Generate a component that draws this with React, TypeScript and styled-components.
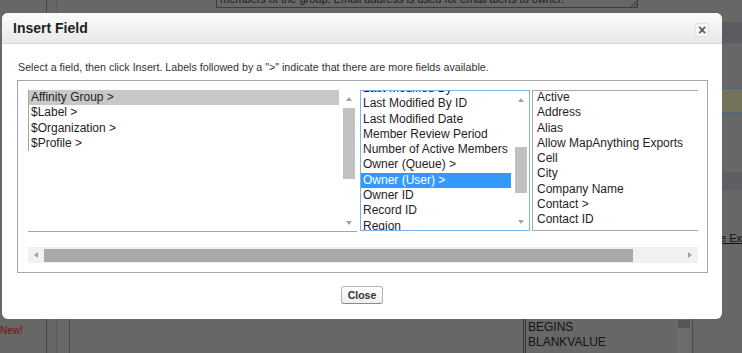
import React from 'react';
import styled, { createGlobalStyle } from 'styled-components';

const GlobalStyle = createGlobalStyle`
  html, body { margin: 0; padding: 0; }
  body {
    background: #676767;
    font-family: "Liberation Sans", Arial, sans-serif;
  }
`;

/* ---------- dimmed page underneath ---------- */

const Page = styled.div`
  position: relative;
  width: 742px;
  height: 353px;
  overflow: hidden;
  background: #676767;
  display: flex;
`;

const LeftRail = styled.div`
  width: 46px;
  flex-shrink: 0;
  display: flex;
  flex-direction: column;
  justify-content: flex-end;
  padding-bottom: 16px;
  box-sizing: border-box;
`;

const NewTag = styled.span`
  font-size: 10px;
  color: #7a0c0c;
  line-height: 12px;
`;

const VLine = styled.div<{ $c: string }>`
  width: 1px;
  flex-shrink: 0;
  background: ${(p) => p.$c};
`;

const Gutter = styled.div`
  width: 9px;
  flex-shrink: 0;
`;

const Main = styled.div`
  width: 665px;
  flex-shrink: 0;
  display: flex;
  flex-direction: column;
`;

const BgTextarea = styled.div`
  margin-left: 159px;
  width: 422px;
  height: 8px;
  box-sizing: border-box;
  border: 1px solid #3c3c3c;
  border-top: none;
  overflow: hidden;
  display: flex;
  justify-content: space-between;
`;

const BgTextareaText = styled.span`
  font-size: 11px;
  line-height: 11px;
  margin-top: -6px;
  margin-left: 3px;
  color: #1c1c1c;
  white-space: nowrap;
`;

const Grip = styled.span`
  width: 6px;
  height: 6px;
  align-self: flex-end;
  background: linear-gradient(135deg, transparent 45%, #333 45%, #333 55%, transparent 55%, transparent 70%, #333 70%, #333 80%, transparent 80%);
`;

const Filler = styled.div`
  flex: 1;
`;

const BottomArea = styled.div`
  height: 34px;
  display: flex;
  padding-left: 12px;
`;

const Panel = styled.div`
  flex: 1;
  border-left: 1px solid #4a4a4a;
  display: flex;
  padding-left: 453px;
`;

const FormulaList = styled.div`
  width: 170px;
  box-sizing: border-box;
  border-left: 3px double #3a3a3a;
  border-right: 1px solid #4a4a4a;
  display: flex;
`;

const FormulaItems = styled.div`
  flex: 1;
  padding: 1px 0 0 2px;
`;

const FormulaItem = styled.div`
  font-size: 12px;
  line-height: 15px;
  color: #141414;
`;

const FormulaScroll = styled.div`
  width: 14px;
  margin-right: 1px;
  background: #6c6c6c;
`;

const FormulaThumb = styled.div`
  height: 8px;
  margin: 1px 1px 0;
  background: #565656;
`;

const RightStrip = styled.div`
  width: 20px;
  flex-shrink: 0;
  display: flex;
  flex-direction: column;
`;

const Band = styled.div<{ $h: number; $bg?: string; $edge?: string }>`
  height: ${(p) => p.$h}px;
  flex-shrink: 0;
  background: ${(p) => p.$bg || 'transparent'};
  box-sizing: border-box;
  ${(p) => (p.$edge ? `border-top: 1px solid ${p.$edge}; border-bottom: 1px solid ${p.$edge};` : '')}
`;

const BgLink = styled.span`
  font-size: 11px;
  line-height: 13px;
  color: #111;
  text-decoration: underline;
  white-space: nowrap;
  margin-left: -2px;
`;

/* ---------- dialog ---------- */

const Dialog = styled.div`
  position: absolute;
  left: 2px;
  top: 13px;
  width: 720px;
  height: 306px;
  background: #fff;
  border-radius: 6px;
  overflow: hidden;
  display: flex;
  flex-direction: column;
  z-index: 2;
`;

const Header = styled.div`
  height: 31px;
  box-sizing: border-box;
  border-bottom: 1px solid #d5d7d9;
  background: linear-gradient(#fbfbfb, #e7e9ea);
  display: flex;
  align-items: center;
  justify-content: space-between;
  padding: 0 13px 0 11px;
  flex-shrink: 0;
`;

const Title = styled.h2`
  margin: 0;
  font-size: 14px;
  font-weight: bold;
  color: #222;
  line-height: 16px;
`;

const CloseX = styled.div`
  width: 14px;
  height: 14px;
  margin-top: 3px;
  box-sizing: border-box;
  border: 1px solid #e2e2e2;
  border-radius: 2px;
  background: #f6f6f6;
  display: flex;
  align-items: center;
  justify-content: center;
  font-size: 14px;
  font-weight: bold;
  line-height: 12px;
  color: #555;
`;

const Body = styled.div`
  padding: 16px 14px 0 15px;
  display: flex;
  flex-direction: column;
`;

const Instructions = styled.p`
  margin: 0 0 6px 1px;
  font-size: 10.7px;
  line-height: 14px;
  color: #333;
`;

const FieldBox = styled.div`
  border: 1px solid #a6a6a6;
  padding: 9px 9px 9px 10px;
`;

const Viewport = styled.div`
  width: 670px;
  overflow: hidden;
`;

const ListsRow = styled.div`
  display: flex;
  align-items: flex-start;
  height: 141px;
`;

const LeftList = styled.div`
  width: 329px;
  height: 142px;
  box-sizing: border-box;
  border-bottom: 1px solid #a5a5a5;
  display: flex;
  flex-shrink: 0;
`;

const LeftItems = styled.div`
  flex: 1;
  padding-right: 2px;
`;

const LeftBlock = styled.div`
  border-left: 1px solid #a5a5a5;
`;

const MidList = styled.div`
  width: 170px;
  height: 141px;
  box-sizing: border-box;
  border: 1px solid #7fb3e8;
  margin-left: 3px;
  display: flex;
  flex-shrink: 0;
  overflow: hidden;
`;

const MidItems = styled.div`
  flex: 1;
  padding-right: 2px;
  overflow: hidden;
`;

const Scrolled = styled.div<{ $off: number }>`
  margin-top: ${(p) => p.$off}px;
`;

const RightList = styled.div`
  width: 230px;
  height: 141px;
  box-sizing: border-box;
  border: 1px solid #a9a9a9;
  border-right: none;
  margin-left: 2px;
  flex-shrink: 0;
  overflow: hidden;
  padding-left: 2px;
`;

const Option = styled.div<{ $sel?: 'gray' | 'blue' }>`
  height: 15.3px;
  line-height: 15.3px;
  font-size: 12px;
  padding-left: 2px;
  white-space: nowrap;
  color: ${(p) => (p.$sel === 'blue' ? '#fff' : '#1e1e1e')};
  background: ${(p) => (p.$sel === 'gray' ? '#c8c8c8' : p.$sel === 'blue' ? '#3399ff' : 'transparent')};
`;

const VScroll = styled.div`
  width: 16px;
  flex-shrink: 0;
  display: flex;
  flex-direction: column;
`;

const VBtn = styled.div`
  height: 17px;
  flex-shrink: 0;
  display: flex;
  align-items: center;
  justify-content: center;
`;

const Track = styled.div`
  flex: 1;
  padding: 0 2px;
`;

const Thumb = styled.div<{ $top: number; $h: number }>`
  margin-top: ${(p) => p.$top}px;
  height: ${(p) => p.$h}px;
  background: #c1c1c1;
`;

const Tri = styled.span<{ $dir: 'up' | 'down' | 'left' | 'right' }>`
  width: 0;
  height: 0;
  ${(p) =>
    p.$dir === 'up'
      ? 'border-left: 3.5px solid transparent; border-right: 3.5px solid transparent; border-bottom: 4px solid #a3a3a3;'
      : p.$dir === 'down'
      ? 'border-left: 3.5px solid transparent; border-right: 3.5px solid transparent; border-top: 4px solid #a3a3a3;'
      : p.$dir === 'left'
      ? 'border-top: 3.5px solid transparent; border-bottom: 3.5px solid transparent; border-right: 4px solid #a3a3a3;'
      : 'border-top: 3.5px solid transparent; border-bottom: 3.5px solid transparent; border-left: 4px solid #a3a3a3;'}
`;

const HScroll = styled.div`
  margin-top: 16px;
  height: 16px;
  background: #f1f1f1;
  display: flex;
  align-items: center;
`;

const HBtn = styled.div`
  width: 16px;
  height: 16px;
  flex-shrink: 0;
  display: flex;
  align-items: center;
  justify-content: center;
`;

const HTrack = styled.div`
  flex: 1;
`;

const HThumb = styled.div`
  width: 589px;
  height: 13px;
  background: #a9a9a9;
`;

const Footer = styled.div`
  display: flex;
  justify-content: center;
  padding-top: 13px;
`;

const Button = styled.button`
  height: 18px;
  padding: 0 6px;
  font-family: "Liberation Sans", Arial, sans-serif;
  font-size: 10.5px;
  font-weight: bold;
  color: #333;
  border: 1px solid #b5b5b5;
  border-bottom-color: #8a8a8a;
  border-radius: 3px;
  background: linear-gradient(#ffffff, #eeeeee);
  line-height: 14px;
`;

function Scrollbar({ top, h }: { top: number; h: number }) {
  return (
    <VScroll>
      <VBtn>
        <Tri $dir="up" />
      </VBtn>
      <Track>
        <Thumb $top={top} $h={h} />
      </Track>
      <VBtn>
        <Tri $dir="down" />
      </VBtn>
    </VScroll>
  );
}

const leftItems = ['Affinity Group >', '$Label >', '$Organization >', '$Profile >'];
const midItems = [
  'Last Modified By',
  'Last Modified By ID',
  'Last Modified Date',
  'Member Review Period',
  'Number of Active Members',
  'Owner (Queue) >',
  'Owner (User) >',
  'Owner ID',
  'Record ID',
  'Region',
];
const rightItems = [
  'Active',
  'Address',
  'Alias',
  'Allow MapAnything Exports',
  'Cell',
  'City',
  'Company Name',
  'Contact >',
  'Contact ID',
  'Country',
];

export default function App() {
  return (
    <>
      <GlobalStyle />
      <Page>
        <LeftRail>
          <NewTag>New!</NewTag>
        </LeftRail>
        <VLine $c="#464646" />
        <Gutter />
        <VLine $c="#5a5a5a" />
        <Main>
          <BgTextarea>
            <BgTextareaText>members of the group. Email address is used for email alerts to owner.</BgTextareaText>
            <Grip />
          </BgTextarea>
          <Filler />
          <BottomArea>
            <Panel>
              <FormulaList>
                <FormulaItems>
                  <FormulaItem>BEGINS</FormulaItem>
                  <FormulaItem>BLANKVALUE</FormulaItem>
                </FormulaItems>
                <FormulaScroll>
                  <FormulaThumb />
                </FormulaScroll>
              </FormulaList>
            </Panel>
          </BottomArea>
        </Main>
        <RightStrip>
          <Band $h={22} />
          <Band $h={21} $bg="#5b5d61" />
          <Band $h={45} />
          <Band $h={25} $bg="#74725b" $edge="#4f6985" />
          <Band $h={59} />
          <Band $h={18} $bg="#5e5f63" />
          <Band $h={42} />
          <BgLink>e Examples</BgLink>
        </RightStrip>

        <Dialog>
          <Header>
            <Title>Insert Field</Title>
            <CloseX>×</CloseX>
          </Header>
          <Body>
            <Instructions>
              Select a field, then click Insert. Labels followed by a "&gt;" indicate that there are more fields available.
            </Instructions>
            <FieldBox>
              <Viewport>
                <ListsRow>
                  <LeftList>
                    <LeftItems>
                      <LeftBlock>
                        {leftItems.map((t, i) => (
                          <Option key={t} $sel={i === 0 ? 'gray' : undefined}>
                            {t}
                          </Option>
                        ))}
                      </LeftBlock>
                    </LeftItems>
                    <Scrollbar top={1} h={71} />
                  </LeftList>
                  <MidList>
                    <MidItems>
                      <Scrolled $off={-10}>
                        {midItems.map((t) => (
                          <Option key={t} $sel={t === 'Owner (User) >' ? 'blue' : undefined}>
                            {t}
                          </Option>
                        ))}
                      </Scrolled>
                    </MidItems>
                    <Scrollbar top={39} h={46} />
                  </MidList>
                  <RightList>
                    <Scrolled $off={-1}>
                      {rightItems.map((t) => (
                        <Option key={t}>{t}</Option>
                      ))}
                    </Scrolled>
                  </RightList>
                </ListsRow>
                <HScroll>
                  <HBtn>
                    <Tri $dir="left" />
                  </HBtn>
                  <HTrack>
                    <HThumb />
                  </HTrack>
                  <HBtn>
                    <Tri $dir="right" />
                  </HBtn>
                </HScroll>
              </Viewport>
            </FieldBox>
          </Body>
          <Footer>
            <Button>Close</Button>
          </Footer>
        </Dialog>
      </Page>
    </>
  );
}
